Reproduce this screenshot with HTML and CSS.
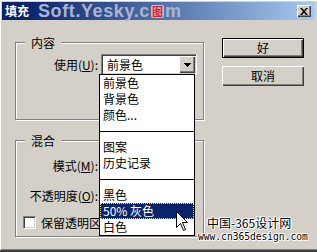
FILE: index.html
```html
<!DOCTYPE html>
<html lang="zh-CN">
<head>
<meta charset="utf-8">
<title>填充</title>
<link rel="stylesheet" href="styles.css">
</head>
<body>
<div class="win">
  <div class="titlebar">
    <span class="title">填充</span>
    <span class="wm">Soft.Yesky.c<span class="wm-icon">图</span>m</span>
    <span class="close"><svg width="8" height="7" viewBox="0 0 8 7"><path d="M0 0h2l2 2.3L6 0h2L5 3.5 8 7H6L4 4.7 2 7H0l3-3.5z"/></svg></span>
  </div>
  <div class="main">
    <div class="left">
      <fieldset class="group g1">
        <legend>内容</legend>
        <div class="row r-use">
          <span class="lbl">使用(<u>U</u>):</span>
          <span class="combo"><span class="combo-text">前景色</span><span class="drop-btn"><svg width="7" height="4" viewBox="0 0 7 4" shape-rendering="crispEdges"><rect x="0" y="0" width="7" height="1"/><rect x="1" y="1" width="5" height="1"/><rect x="2" y="2" width="3" height="1"/><rect x="3" y="3" width="1" height="1"/></svg></span></span>
        </div>
      </fieldset>
      <fieldset class="group g2">
        <legend>混合</legend>
        <div class="row r-mode"><span class="lbl">模式(<u>M</u>):</span></div>
        <div class="row r-op"><span class="lbl">不透明度(<u>O</u>):</span></div>
        <div class="check-row"><span class="checkbox"></span><span class="check-label">保留透明区</span></div>
      </fieldset>
    </div>
    <div class="right">
      <button class="btn btn-default">好</button>
      <button class="btn">取消</button>
    </div>
  </div>
  <ul class="list">
    <li>前景色</li>
    <li>背景色</li>
    <li>颜色...</li>
    <li class="sep"><span></span></li>
    <li>图案</li>
    <li>历史记录</li>
    <li class="sep"><span></span></li>
    <li>黑色</li>
    <li class="selected">50% 灰色</li>
    <li>白色</li>
  </ul>
  <svg class="cursor" width="13" height="21" viewBox="0 0 13 21"><path d="M0.5 0.5V16.5L4.5 12.5L7.5 19.5L9.5 18.5L6.5 11.5H11.5Z" fill="#fff" stroke="#000" stroke-width="1" stroke-linejoin="miter"/></svg>
  <div class="wm2">
    <div class="wm2-cn">中国-365设计网</div>
    <div class="wm2-url">www.cn365design.com</div>
  </div>
</div>
</body>
</html>
```
FILE: styles.css
```css
html, body {
  margin: 0;
  padding: 0;
}
body {
  font-family: "Noto Sans CJK SC", "Noto Sans CJK JP", sans-serif;
  font-size: 12px;
  color: #000;
  background: #d4d0c8;
}
.win {
  position: relative;
  width: 317px;
  height: 252px;
  box-sizing: border-box;
  background: #d4d0c8;
  padding: 2px 2px 0 2px;
  border-bottom: 2px solid #404040;
  box-shadow: inset 1px 1px 0 #fff, inset 0 -1px 0 #808080;
  overflow: hidden;
}
.titlebar {
  height: 18px;
  display: flex;
  align-items: center;
  background: linear-gradient(to right, #0a246a 0%, #0a246a 8%, #a6caf0 100%);
  color: #fff;
  white-space: nowrap;
}
.title {
  margin-left: 3px;
  font-weight: bold;
  font-size: 12px;
  line-height: 18px;
}
.wm {
  margin-left: 9px;
  font-family: "Liberation Sans", Arial, sans-serif;
  font-weight: bold;
  font-size: 18px;
  line-height: 18px;
  letter-spacing: 0.6px;
  color: #a9b5d2;
  display: flex;
  align-items: center;
}
.wm-icon {
  display: inline-block;
  width: 13px;
  height: 13px;
  margin: 0 1px;
  border-radius: 2px;
  background: #e6aebd;
  color: #c8283c;
  font-family: "Noto Sans CJK SC", sans-serif;
  font-size: 11px;
  line-height: 13px;
  text-align: center;
  letter-spacing: 0;
}
.close {
  margin-left: auto;
  margin-right: 4px;
  width: 14px;
  height: 12px;
  box-sizing: border-box;
  background: #d4d0c8;
  box-shadow: inset 1px 1px 0 #fff, inset -1px -1px 0 #404040, inset -2px -2px 0 #808080;
  display: flex;
  align-items: center;
  justify-content: center;
  padding-right: 1px;
}
.close svg {
  display: block;
  fill: #000;
}
.main {
  display: flex;
  padding: 16px 0 0 13px;
}
.left {
  width: 189px;
}
.group {
  margin: 0;
  padding: 0;
  min-width: 0;
  width: 189px;
  box-sizing: border-box;
  border: 1px solid #808080;
  box-shadow: 1px 1px 0 #fff, inset 1px 1px 0 #fff;
}
.group legend {
  margin-left: 9px;
  padding: 0 6px;
  line-height: 13px;
  height: 13px;
  font-size: 12px;
  background: #d4d0c8;
}
.g1 {
  padding-bottom: 44px;
}
.g2 {
  margin-top: 14px;
  padding-bottom: 7px;
}
.row {
  display: flex;
  align-items: center;
  height: 21px;
}
.lbl {
  width: 82px;
  text-align: right;
  line-height: 21px;
  white-space: nowrap;
}
.r-use {
  margin-top: 5px;
}
.r-mode {
  margin-top: 8px;
}
.r-op {
  margin-top: 9px;
}
.combo {
  margin-left: 3px;
  width: 96px;
  height: 21px;
  box-sizing: border-box;
  background: #fff;
  border: 1px solid;
  border-color: #808080 #fff #fff #808080;
  box-shadow: inset 1px 1px 0 #404040, inset -1px -1px 0 #d4d0c8;
  display: flex;
  align-items: center;
  padding: 1px;
}
.combo-text {
  flex: 1;
  padding-left: 4px;
  line-height: 17px;
}
.drop-btn {
  width: 16px;
  height: 17px;
  box-sizing: border-box;
  background: #d4d0c8;
  box-shadow: inset 1px 1px 0 #fff, inset -1px -1px 0 #404040, inset -2px -2px 0 #808080;
  display: flex;
  align-items: center;
  justify-content: center;
}
.drop-btn svg {
  display: block;
  fill: #000;
}
.check-row {
  margin-top: 10px;
  display: flex;
  align-items: center;
  height: 13px;
}
.checkbox {
  margin-left: 7px;
  width: 13px;
  height: 13px;
  box-sizing: border-box;
  background: #fff;
  border: 1px solid;
  border-color: #808080 #fff #fff #808080;
  box-shadow: inset 1px 1px 0 #404040, inset -1px -1px 0 #d4d0c8;
}
.check-label {
  margin-left: 5px;
  line-height: 13px;
  white-space: nowrap;
}
.right {
  margin-left: 18px;
  padding-top: 2px;
  display: flex;
  flex-direction: column;
  gap: 8px;
}
.btn {
  width: 82px;
  height: 20px;
  box-sizing: border-box;
  margin: 0;
  padding: 0;
  border: 0;
  background: #d4d0c8;
  font-family: inherit;
  font-size: 12px;
  line-height: 18px;
  color: #000;
  box-shadow: inset 1px 1px 0 #fff, inset -1px -1px 0 #404040, inset -2px -2px 0 #808080;
}
.btn-default {
  border: 1px solid #000;
}
.list {
  position: absolute;
  left: 99px;
  top: 74px;
  width: 96px;
  margin: 0;
  padding: 0;
  list-style: none;
  background: #fff;
  border: 1px solid #000;
  box-sizing: border-box;
}
.list li {
  height: 16px;
  line-height: 16px;
  padding-left: 3px;
  white-space: nowrap;
}
.list li.sep {
  padding: 8px 0 0 0;
  box-sizing: border-box;
}
.list li.sep span {
  display: block;
  height: 1px;
  background: #000;
}
.list li.selected {
  background: #0a246a;
  color: #fff;
  outline: 1px dotted #f2dc98;
  outline-offset: -1px;
}
.cursor {
  position: absolute;
  left: 176px;
  top: 211px;
  display: block;
}
.wm2 {
  position: absolute;
  left: 198px;
  top: 215px;
  white-space: nowrap;
  color: #000;
  text-shadow: 1px 0 0 #fff, -1px 0 0 #fff, 0 1px 0 #fff, 0 -1px 0 #fff, 1px 1px 0 #fff, -1px -1px 0 #fff;
}
.wm2-cn {
  padding-left: 9px;
  font-size: 12px;
  line-height: 16px;
}
.wm2-url {
  font-family: "DejaVu Sans Mono", "Liberation Mono", monospace;
  font-size: 9.6px;
  line-height: 12px;
}
```
